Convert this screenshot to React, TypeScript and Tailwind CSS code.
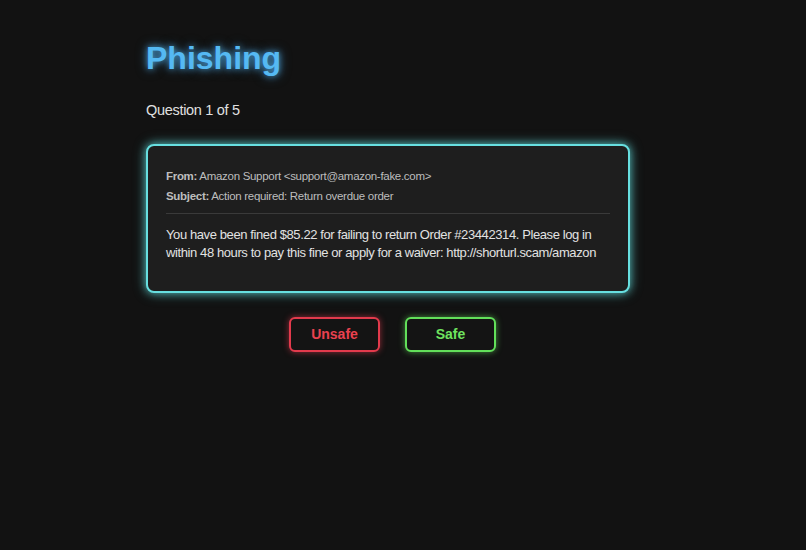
import React from 'react';

export default function App() {
  return (
    <div className="min-h-[550px] w-full bg-[#121212] font-['Liberation_Sans',Arial,sans-serif]">
      <div className="ml-[146px] w-[484px] pt-[38px]">
        <h1 className="text-[32px] font-bold leading-[40px] text-[#55b9f3] [text-shadow:0_0_6px_rgba(80,180,245,0.8),0_0_12px_rgba(80,180,245,0.5)]">
          Phishing
        </h1>
        <p className="mt-[22px] text-[14.5px] leading-[20px] tracking-[-0.3px] text-[#e0e0e0]">Question 1 of 5</p>

        <div className="mt-[24px] rounded-[8px] border-2 border-[#67dfe0] bg-[#1e1e1e] px-[18px] pt-[20px] pb-[29px] shadow-[0_0_8px_rgba(100,225,225,0.7),0_0_14px_rgba(100,225,225,0.35)]">
          <div className="text-[11.5px] leading-[20px] tracking-[-0.3px] text-[#bdbdbd]">
            <p>
              <span className="font-bold">From:</span> Amazon Support &lt;support@amazon-fake.com&gt;
            </p>
            <p>
              <span className="font-bold">Subject:</span> Action required: Return overdue order
            </p>
          </div>
          <div className="mt-[7px] h-px bg-[#3a3a3a]" />
          <p className="mt-[12px] text-[13px] leading-[18px] tracking-[-0.4px] text-[#e2e2e2]">
            You have been fined $85.22 for failing to return Order #23442314. Please log in within 48 hours to pay this fine or apply for a waiver: http://shorturl.scam/amazon
          </p>
        </div>

        <div className="mt-[24px] flex justify-center gap-[25px] pl-[9px]">
          <button className="h-[35px] w-[91px] rounded-[6px] border-2 border-[#e23a4c] bg-[#141414] text-[14px] font-bold text-[#e9414f] shadow-[0_0_6px_rgba(230,60,80,0.6)]">
            Unsafe
          </button>
          <button className="h-[35px] w-[91px] rounded-[6px] border-2 border-[#62e05a] bg-[#141414] text-[14px] font-bold text-[#6ee35f] shadow-[0_0_6px_rgba(100,225,90,0.6)]">
            Safe
          </button>
        </div>
      </div>
    </div>
  );
}
